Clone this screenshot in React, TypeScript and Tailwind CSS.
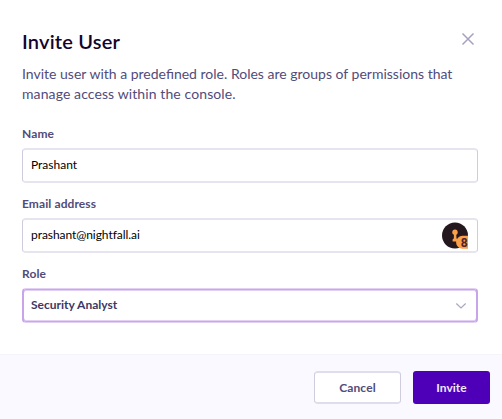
import React from "react";

const label = "block h-[17px] text-[12px] leading-[17px] font-bold tracking-[0.1px] text-[#514c7a]";
const field =
  "mt-[6px] flex h-[35px] w-full items-center rounded-[4px] border-x border-y-2 border-x-[#cfccdf] border-y-[#e6e4ee] bg-white pl-2 text-[12px]";

function PasswordBadge() {
  return (
    <svg width="28" height="28" viewBox="0 0 28 28" aria-hidden="true" className="shrink-0">
      <circle cx="13" cy="13.5" r="13" fill="#24171e" />
      <circle cx="13" cy="10.3" r="2.7" fill="#f9a04a" />
      <path d="M12 11.5h2.2l.3 5 1.5.9v2h-5.4v-2l1.2-.9z" fill="#f9a04a" />
      <path d="M20.5 13.8H26v12.9h-5.5a6.4 6.4 0 0 1 0-12.9z" fill="#f9a04a" />
      <text x="22.2" y="24.6" textAnchor="middle" fontSize="12" fontWeight="700" fontFamily="Roboto, sans-serif" fill="#4a2433">8</text>
    </svg>
  );
}

export default function App() {
  return (
    <div className="flex h-[419px] w-[502px] flex-col overflow-hidden bg-white font-['Lato','Liberation_Sans',sans-serif]">
      <main className="h-[354px] shrink-0 pl-[22px] pr-6 pt-[28px]">
        <header className="flex h-[26px] justify-between">
          <h1 className="text-[20px] leading-[26px] font-semibold tracking-[0.2px] text-[#11052c]">Invite User</h1>
          <button aria-label="Close" className="mt-[4px] mr-[3px] h-[14px] w-[14px]">
            <svg width="14" height="14" viewBox="0 0 14 14" fill="none" stroke="#a5a1c0" strokeWidth="1.5">
              <path d="M1.5 1.5l11 11M12.5 1.5l-11 11" />
            </svg>
          </button>
        </header>
        <p className="mt-[10px] h-10 whitespace-nowrap text-[14px] leading-5 text-[#514c7a]">
          Invite user with a predefined role. Roles are groups of permissions that
          <br />
          <span className="tracking-[0.1px]">manage access within the console.</span>
        </p>
        <div className="mt-[21px]">
          <label className={label}>Name</label>
          <div className={`${field} text-black`}>
            <span className="-mt-[2px]">Prashant</span>
          </div>
        </div>
        <div className="mt-[12px]">
          <label className={label}>Email address</label>
          <div className={`${field} justify-between pr-[7px] text-black`}>
            <span className="-mt-[2px] tracking-[-0.06px]">prashant@nightfall.ai</span>
            <PasswordBadge />
          </div>
        </div>
        <div className="mt-[12px]">
          <label className={label}>Role</label>
          <button className="mt-[6px] flex h-[35px] w-full items-center justify-between rounded-[4px] border-x-2 border-y border-x-[#c8a4ea] border-y-[#e3d1f5] bg-white pr-[9px] pl-[7px] text-[12px] font-bold text-[#3d3765] shadow-[inset_0_1px_0_#c8a4ea,inset_0_-1px_0_#c8a4ea,inset_0_2px_0_#e3d1f5,inset_0_-2px_0_#e3d1f5]">
            <span className="-mt-[2px]">Security Analyst</span>
            <svg width="12" height="8" viewBox="0 0 12 8" fill="none" stroke="#aaa7c3" strokeWidth="1.2">
              <path d="M1.3 1.5L6 6l4.7-4.5" />
            </svg>
          </button>
        </div>
      </main>
      <footer className="flex h-[65px] shrink-0 justify-end gap-3 border-t border-[#f5f4f8] bg-[#faf9ff] pt-4 pr-3">
        <button className="h-[33px] w-[87px] rounded-[4px] border-x border-y-2 border-x-[#cfccdf] border-y-[#dfdde9] bg-white text-[12px] font-bold tracking-[0.1px] text-[#514c7a]">Cancel</button>
        <button className="h-[33px] w-[77px] rounded-[3px] bg-[#4e00b8] text-[12px] font-bold text-[#f1e8fb]">Invite</button>
      </footer>
    </div>
  );
}
